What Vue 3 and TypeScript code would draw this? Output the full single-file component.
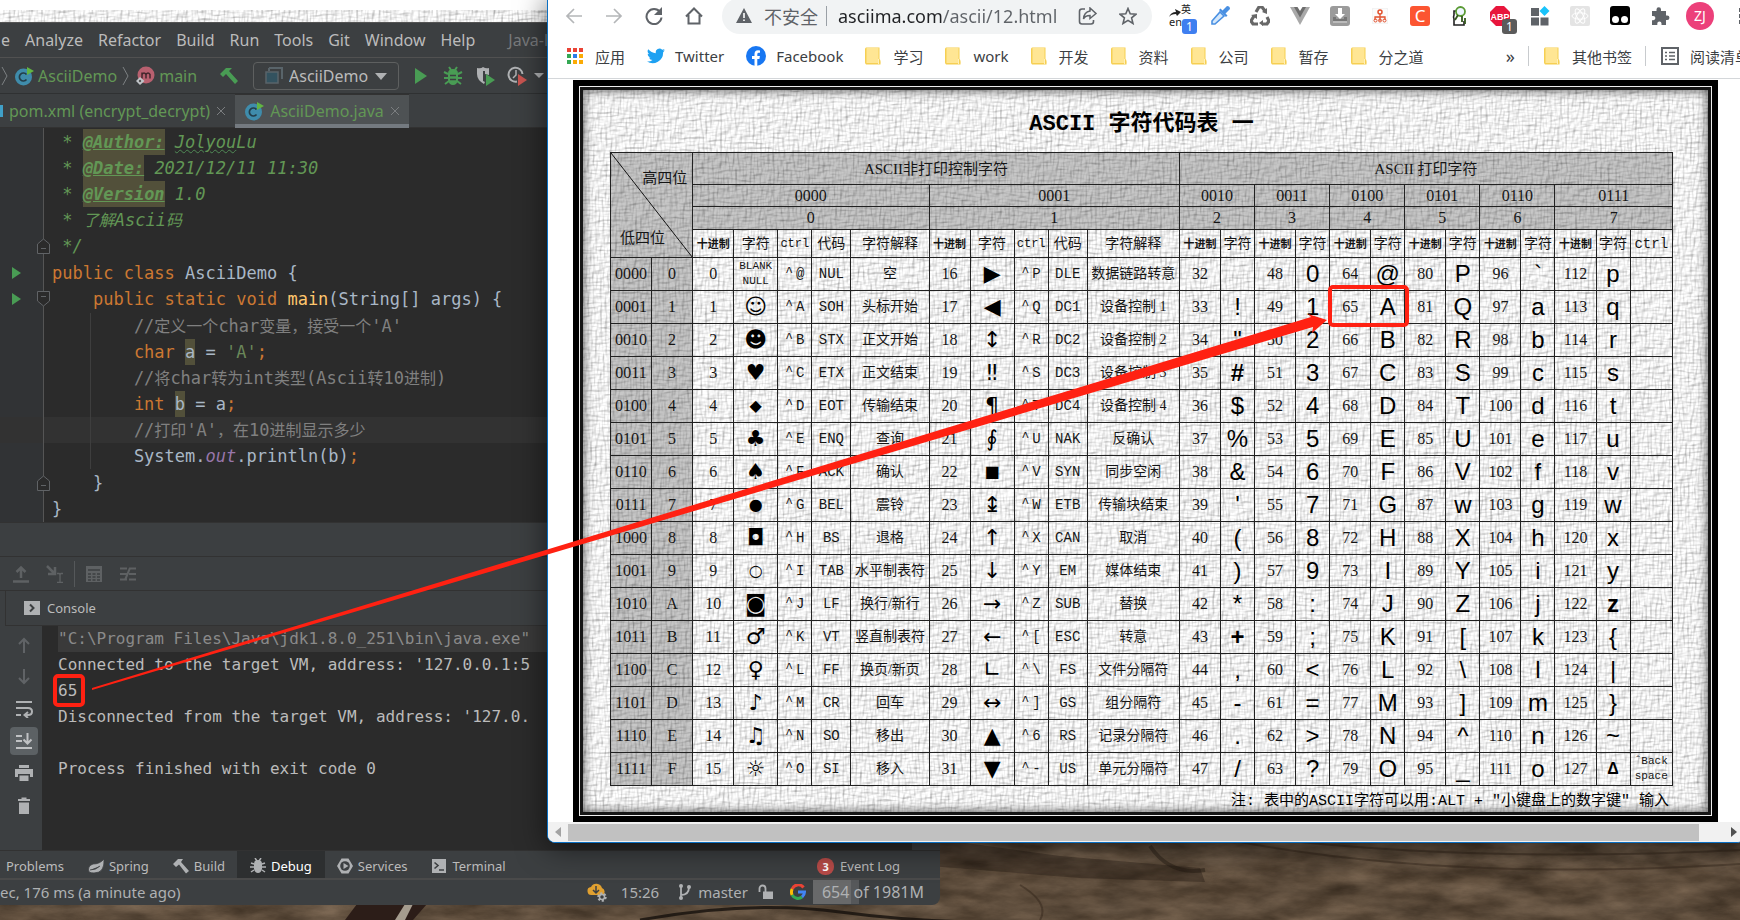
<script setup lang="ts">
type Token = { cls: string; text: string }
type Line = { run?: boolean; fold?: 'down' | 'up'; now?: boolean; gap?: boolean; guide?: boolean; tokens: Token[] }

const split = (cls: string, text: string): Token[] =>
  text
    .split(/([\u2e80-\uffef]+)/)
    .filter(Boolean)
    .map((part) => ({ cls: /[\u2e80-\uffef]/.test(part) ? cls + ' zh' : cls, text: part }))

const code = (...pairs: [string, string][]): Token[] => pairs.flatMap(([cls, text]) => split(cls, text))

const lines: Line[] = [
  { tokens: code(['doc', ' * '], ['tag', '@Author:'], ['doc', ' '], ['doc wave', 'Jolyou'], ['doc', 'Lu']) },
  { tokens: code(['doc', ' * '], ['tag', '@Date:'], ['doc', ' 2021/12/11 11:30']) },
  { tokens: code(['doc', ' * '], ['tag', '@Version'], ['doc', ' 1.0']) },
  { tokens: code(['doc', ' * 了解Ascii码']) },
  { fold: 'up', tokens: code(['doc', ' */']) },
  { run: true, gap: true, tokens: code(['kw', 'public class '], ['id', 'AsciiDemo {']) },
  { run: true, fold: 'down', tokens: code(['kw', '    public static void '], ['fn', 'main'], ['id', '(String[] args) {']) },
  { gap: true, guide: true, tokens: code(['cm', "        //定义一个char变量，接受一个'A'"]) },
  { guide: true, tokens: code(['kw', '        char '], ['id mark', 'a'], ['id', ' = '], ['str', "'A'"], ['kw', ';']) },
  { guide: true, tokens: code(['cm', '        //将char转为int类型(Ascii转10进制)']) },
  { guide: true, tokens: code(['kw', '        int '], ['id mark', 'b'], ['id', ' = a'], ['kw', ';']) },
  { guide: true, now: true, tokens: code(['cm', "        //打印'A'，在10进制显示多少"]) },
  { guide: true, tokens: code(['id', '        System.'], ['field', 'out'], ['id', '.println(b)'], ['kw', ';']) },
  { fold: 'up', gap: true, tokens: code(['id', '    }']) },
  { tokens: code(['id', '}']) },
]

const menus = ['e', 'Analyze', 'Refactor', 'Build', 'Run', 'Tools', 'Git', 'Window', 'Help']
const folders = ['学习', 'work', '开发', '资料', '公司', '暂存', '分之道']

const hex = '0123456789ABCDEF'.split('')
const glyphs0 = ['', '☺', '☻', '♥', '◆', '♣', '♠', '●', '◘', '○', '◙', '♂', '♀', '♪', '♫', '☼']
const glyphs1 = ['▶', '◀', '↕', '‼', '¶', '∮', '■', '↨', '↑', '↓', '→', '←', '∟', '↔', '▲', '▼']
const smallGlyphs = '◆●○■'
const ctrl0 = '@ABCDEFGHIJKLMNO'.split('')
const ctrl1 = 'PQRSTUVWXYZ[\\]6-'.split('')
const code0 = ['NUL', 'SOH', 'STX', 'ETX', 'EOT', 'ENQ', 'ACK', 'BEL', 'BS', 'TAB', 'LF', 'VT', 'FF', 'CR', 'SO', 'SI']
const code1 = ['DLE', 'DC1', 'DC2', 'DC3', 'DC4', 'NAK', 'SYN', 'ETB', 'CAN', 'EM', 'SUB', 'ESC', 'FS', 'GS', 'RS', 'US']
const desc0 = ['空', '头标开始', '正文开始', '正文结束', '传输结束', '查询', '确认', '震铃', '退格', '水平制表符', '换行/新行', '竖直制表符', '换页/新页', '回车', '移出', '移入']
const desc1 = ['数据链路转意', '设备控制 1', '设备控制 2', '设备控制 3', '设备控制 4', '反确认', '同步空闲', '传输块结束', '取消', '媒体结束', '替换', '转意', '文件分隔符', '组分隔符', '记录分隔符', '单元分隔符']

const rows = hex.map((h, i) => ({
  bits: i.toString(2).padStart(4, '0'),
  hex: h,
  control: [
    { dec: i, glyph: glyphs0[i], ctrl: ctrl0[i], code: code0[i], desc: desc0[i] },
    { dec: i + 16, glyph: glyphs1[i], ctrl: ctrl1[i], code: code1[i], desc: desc1[i] },
  ],
  print: [2, 3, 4, 5, 6, 7].map((n) => {
    const dec = n * 16 + i
    const ch = dec === 87 ? 'w' : dec === 127 ? 'Δ' : String.fromCharCode(dec)
    return { dec, ch }
  }),
}))

const strong = '#+z'
const columns = [
  'bit', 'bit', 'dec', 'sym', 'ctl', 'cod', 'dsc', 'dec', 'sym', 'ctl', 'cod', 'long',
  'dec', 'chr', 'dec', 'chr', 'dec', 'chr', 'dec', 'chr', 'dec', 'chr', 'dec', 'chr', 'back',
]
</script>

<template>
  <div class="desktop">
    <svg class="wallpaper" width="100%" height="100%" aria-hidden="true">
      <defs>
        <filter id="grain" x="0" y="0" width="100%" height="100%" color-interpolation-filters="sRGB">
          <feTurbulence type="fractalNoise" baseFrequency="0.02 0.06" numOctaves="6" seed="7" />
          <feColorMatrix values="0.28 0.12 0 0 0.16  0.25 0.1 0 0 0.12  0.22 0.08 0 0 0.08  0 0 0 0 1" />
        </filter>
        <filter id="weave" x="0" y="0" width="100%" height="100%" color-interpolation-filters="sRGB">
          <feTurbulence type="fractalNoise" baseFrequency="0.08 0.4" numOctaves="2" seed="3" result="a" />
          <feDiffuseLighting in="a" surfaceScale="0.5" diffuseConstant="1.27" lighting-color="#fff" result="la">
            <feDistantLight azimuth="225" elevation="50" />
          </feDiffuseLighting>
          <feTurbulence type="fractalNoise" baseFrequency="0.4 0.08" numOctaves="2" seed="9" result="b" />
          <feDiffuseLighting in="b" surfaceScale="0.5" diffuseConstant="1.27" lighting-color="#fff" result="lb">
            <feDistantLight azimuth="225" elevation="50" />
          </feDiffuseLighting>
          <feBlend in="la" in2="lb" mode="multiply" />
        </filter>
      </defs>
      <rect width="100%" height="100%" filter="url(#grain)" />
      <path d="M930 838L1060 856 1200 868 1205 882 1080 878 930 866Z" fill="#1c130d" opacity=".35" />
      <path d="M1150 846q20 30 55 24" stroke="#1c130d" stroke-width="4" fill="none" opacity=".4" />
      <path d="M640 920q110-20 200-8t190 10" stroke="#15100c" stroke-width="3" fill="none" opacity=".8" />
      <path d="M345 920l12-16h70l-14 16z" fill="#2c1d18" />
      <path d="M395 920l10-16h8l-8 16z" fill="#a59c8e" />
      <path d="M1240 842q220 40 500 22M1300 842q200 20 440 8M1020 885q30 18 20 35" stroke="#2a1d14" stroke-width="2" fill="none" opacity=".4" />
    </svg>

    <div class="back-window">
      <svg class="strip" width="100%" height="12" aria-hidden="true"><rect width="100%" height="12" filter="url(#weave)" /></svg>
    </div>

    <section class="ide" aria-label="IDE">
      <nav class="menu">
        <button v-for="m in menus" :key="m" type="button">{{ m }}</button>
        <span class="project">Java-l</span>
      </nav>

      <div class="toolbar">
        <div class="crumbs">
          <svg width="10" height="20" viewBox="0 0 10 20"><path d="M2 1l5 9-5 9" fill="none" stroke="#7d8083" /></svg>
          <svg width="20" height="20" viewBox="0 0 20 20"><circle cx="9.500" cy="11" r="8.500" fill="#3f8cab" /><path d="M12.500 8.500a4 4 0 1 0 0 5" fill="none" stroke="#233d49" stroke-width="1.700" /><path d="M13 1l7 4-7 4z" fill="#62b543" /></svg>
          <span>AsciiDemo</span>
          <svg width="10" height="20" viewBox="0 0 10 20"><path d="M2 1l5 9-5 9" fill="none" stroke="#7d8083" /></svg>
          <svg width="20" height="20" viewBox="0 0 20 20"><circle cx="11" cy="9" r="8.500" fill="#b8606f" /><path d="M7 12.500v-6M7 8.500q2-3 4 0v4M11 8.500q2-3 4 0v4" fill="none" stroke="#43272c" stroke-width="1.500" /><path d="M5 11l4.500 4L5 19l-4-4z" fill="#c0c4c8" /><circle cx="5" cy="15" r="1.200" fill="#555" /></svg>
          <span>main</span>
        </div>
        <button type="button" class="act" aria-label="Build"><svg width="20" height="20" viewBox="0 0 20 20"><path d="M1 8l6-6h6L10 5l9 10-3 3-9-10-3 3z" fill="#499c54" /></svg></button>
        <div class="combo">
          <svg width="18" height="18" viewBox="0 0 18 18"><path d="M4 1h13v11M4 1v3" fill="none" stroke="#59646a" stroke-width="2" /><rect x="1" y="5" width="12" height="11" fill="#33525f" stroke="#59646a" stroke-width="1.500" /></svg>
          <select aria-label="Run configuration"><option>AsciiDemo</option></select>
          <svg width="12" height="8" viewBox="0 0 12 8"><path d="M0 1h12L6 8z" fill="#afb1b3" /></svg>
        </div>
        <button type="button" class="act" aria-label="Run"><svg width="20" height="20" viewBox="0 0 20 20"><path d="M4 2l12 8-12 8z" fill="#499c54" /></svg></button>
        <button type="button" class="act" aria-label="Debug"><svg width="20" height="20" viewBox="0 0 20 20"><path d="M5 7.500Q5 3 10 3t5 4.500V14q-1 5-5 5t-5-5z" fill="#499c54" /><path d="M6 1l2 3M14 1l-2 3M1 6l4 2M19 6l-4 2M1 12h4M19 12h-4M2 18l4-3M18 18l-4-3" stroke="#499c54" stroke-width="2" /><path d="M7 9.500h6M7 13.500h6" stroke="#3c3f41" stroke-width="1.500" /></svg></button>
        <button type="button" class="act" aria-label="Coverage"><svg width="20" height="20" viewBox="0 0 20 20"><path d="M2 2q4 1 6-1 3 2 6 1v7l-4-1v-3H8v10l2 1-1 2q-7-4-7-10z" fill="#afb1b3" /><path d="M11 8l9 6-9 6z" fill="#499c54" /></svg></button>
        <button type="button" class="act" aria-label="Profile"><svg width="20" height="20" viewBox="0 0 20 20"><path d="M10 15.500A7 7 0 1 1 15.500 8" fill="none" stroke="#afb1b3" stroke-width="2" /><path d="M9 4v5l-3 3" fill="none" stroke="#afb1b3" stroke-width="1.500" /><path d="M11 8l9 6-9 6z" fill="#c75450" /></svg></button>
        <svg width="12" height="7" viewBox="0 0 12 7"><path d="M1 1h10L6 6z" fill="#afb1b3" /></svg>
      </div>

      <div class="tabs" role="tablist">
        <button type="button" role="tab" class="tab pom"><i></i><span>pom.xml (encrypt_decrypt)</span>
          <svg width="10" height="10" viewBox="0 0 10 10"><path d="M1 1l8 8M9 1l-8 8" stroke="#7b7e80" /></svg></button>
        <button type="button" role="tab" class="tab on" aria-selected="true">
          <svg width="20" height="20" viewBox="0 0 20 20"><circle cx="9.500" cy="11" r="8.500" fill="#3f8cab" /><path d="M12.500 8.500a4 4 0 1 0 0 5" fill="none" stroke="#233d49" stroke-width="1.700" /><path d="M13 1l7 4-7 4z" fill="#62b543" /></svg>
          <span>AsciiDemo.java</span>
          <svg width="10" height="10" viewBox="0 0 10 10"><path d="M1 1l8 8M9 1l-8 8" stroke="#7b7e80" /></svg></button>
      </div>

      <div class="editor">
        <div v-for="(l, i) in lines" :key="i" class="line" :class="{ now: l.now, gap: l.gap }">
          <div class="gutter">
            <svg v-if="l.run" width="10" height="12" viewBox="0 0 10 12"><path d="M1 0l9 6-9 6z" fill="#499c54" /></svg>
            <svg v-if="l.fold === 'up'" class="fold" width="13" height="16" viewBox="0 0 13 16"><path d="M.5 15.500V6l6-5 6 5v9.500zM4 10.500h5" fill="#2b2b2b" stroke="#606366" /></svg>
            <svg v-if="l.fold === 'down'" class="fold" width="13" height="16" viewBox="0 0 13 16"><path d="M.5.5V10l6 5 6-5V.5zM4 5.500h5" fill="#2b2b2b" stroke="#606366" /></svg>
          </div>
          <div class="src" :class="{ guide: l.guide }"><span v-for="(t, k) in l.tokens" :key="k" :class="t.cls">{{ t.text }}</span></div>
        </div>
      </div>

      <div class="panel-head"></div>
      <div class="debug-tools">
        <button type="button" aria-label="Step out"><svg width="18" height="18" viewBox="0 0 18 18"><path d="M9 13V3M4.500 7L9 2.500 13.500 7M1 16.500h16" fill="none" stroke="#5e6163" stroke-width="2.500" /></svg></button>
        <button type="button" aria-label="Run to cursor"><svg width="18" height="18" viewBox="0 0 18 18"><path d="M1 1l7 7M2 9h7V2" fill="none" stroke="#5e6163" stroke-width="2.500" /><path d="M11 8.500h2l1 1 1-1h2M14 9v8M11 17.500h6" fill="none" stroke="#5e6163" stroke-width="1.300" /></svg></button>
        <i class="vsep"></i>
        <button type="button" aria-label="Evaluate"><svg width="18" height="18" viewBox="0 0 18 18"><path d="M1 1h16v16H1z" fill="#5e6163" /><path d="M3 5h12M3 9h3M7.500 9h3M12 9h3M3 12h3M7.500 12h3M12 12h3M3 15h3M7.500 15h3M12 15h3" stroke="#3c3f41" stroke-width="1.600" /></svg></button>
        <button type="button" aria-label="Trace"><svg width="18" height="18" viewBox="0 0 18 18"><path d="M1 3.500h7M1 9h7M1 14.500h7M10 3.500h7M10 9h7M10 14.500h7M6 15l5-12" fill="none" stroke="#5e6163" stroke-width="2" /></svg></button>
      </div>
      <div class="console-head"><svg width="16" height="16" viewBox="0 0 16 16"><path d="M0 1h16v14H0z" fill="#afb1b3" /><path d="M6 4.500L9.500 8 6 11.500" fill="none" stroke="#3c3f41" stroke-width="2" /></svg><span>Console</span></div>

      <div class="console">
        <div class="side">
          <button type="button" aria-label="Up"><svg width="18" height="18" viewBox="0 0 18 18"><path d="M9 17V3M4 8l5-5 5 5" fill="none" stroke="#606366" stroke-width="2" /></svg></button>
          <button type="button" aria-label="Down"><svg width="18" height="18" viewBox="0 0 18 18"><path d="M9 1v14M4 10l5 5 5-5" fill="none" stroke="#606366" stroke-width="2" /></svg></button>
          <button type="button" aria-label="Soft wrap"><svg width="18" height="18" viewBox="0 0 18 18"><path d="M1 2h16M1 8h12q4 0 4 3.500T13 15h-2M1 15h5M13 12l-3.500 3 3.500 3" fill="none" stroke="#afb1b3" stroke-width="2" /></svg></button>
          <button type="button" class="on" aria-label="Scroll to end"><svg width="18" height="18" viewBox="0 0 18 18"><path d="M1 4h6M1 9h6M1 16h16M12.500 1v10M8.500 7.500l4 4 4-4" fill="none" stroke="#c0c2c4" stroke-width="2" /></svg></button>
          <button type="button" aria-label="Print"><svg width="18" height="18" viewBox="0 0 18 18"><path d="M4 1h10v3H4zM0 5h18v8h-3v-3H3v3H0zM4.500 11.500h9V17h-9z" fill="#afb1b3" /></svg></button>
          <button type="button" aria-label="Clear"><svg width="18" height="18" viewBox="0 0 18 18"><path d="M3 3h3.500V1.500h5V3H15v2H3zM4 6.500h10V18H4z" fill="#afb1b3" /></svg></button>
        </div>
        <div class="output">
          <p class="cmd">"C:\Program Files\Java\jdk1.8.0_251\bin\java.exe"</p>
          <p>Connected to the target VM, address: '127.0.0.1:5</p>
          <p>65</p>
          <p>Disconnected from the target VM, address: '127.0.</p>
          <p>&nbsp;</p>
          <p>Process finished with exit code 0</p>
        </div>
        <div class="rail"></div>
      </div>

      <div class="tool-tabs">
        <button type="button" class="first">Problems</button>
        <button type="button"><svg width="16" height="16" viewBox="0 0 16 16"><path d="M16 1q1 14-10 14-3 0-5-1Q-1 8 5 6q7 0 11-5zM2 12q6 0 10-4" fill="#afb1b3" stroke="#3c3f41" stroke-width=".8" /></svg>Spring</button>
        <button type="button"><svg width="16" height="16" viewBox="0 0 16 16"><path d="M0 6l5-5h5L8 4l8 9-3 2.500L6 6.500 3 9z" fill="#afb1b3" /></svg>Build</button>
        <button type="button" class="on"><svg width="16" height="16" viewBox="0 0 16 16"><path d="M4 6q0-4 4-4t4 4v5q-1 4-4 4t-4-4z" fill="#afb1b3" /><path d="M5 0l2 3M11 0L9 3M1 5l3 1M15 5l-3 1M0 9h4M16 9h-4M1 14l3-2M15 14l-3-2" stroke="#afb1b3" stroke-width="1.500" /></svg>Debug</button>
        <button type="button"><svg width="16" height="16" viewBox="0 0 16 16"><path d="M4.500.5h7L16 8l-4.500 7.500h-7L0 8z" fill="#afb1b3" /><circle cx="8" cy="8" r="4.800" fill="#3c3f41" /><path d="M6.500 5l5 3-5 3z" fill="#afb1b3" /></svg>Services</button>
        <button type="button"><svg width="16" height="16" viewBox="0 0 16 16"><path d="M1 1h14v14H1z" fill="#afb1b3" /><path d="M3.500 4.500L7 7.500l-3.500 3M8 12h5" fill="none" stroke="#3c3f41" stroke-width="1.600" /></svg>Terminal</button>
        <button type="button" class="log"><b>3</b>Event Log</button>
      </div>

      <footer class="status">
        <span class="msg">ec, 176 ms (a minute ago)</span>
        <svg width="20" height="20" viewBox="0 0 20 20"><path d="M5 13a4 4 0 0 1-1-8 6 6 0 0 1 11 1 4 4 0 0 1 1 7z" fill="#e0a030" /><path d="M9 4v6M6 8l3 3 3-3" stroke="#3c3f41" stroke-width="1.500" fill="none" /><circle cx="15" cy="15" r="3.500" fill="none" stroke="#afb1b3" stroke-width="2.500" stroke-dasharray="2 1.600" /><circle cx="15" cy="15" r="2.500" fill="none" stroke="#afb1b3" stroke-width="1.500" /></svg>
        <span class="time">15:26</span>
        <svg width="14" height="18" viewBox="0 0 14 18"><path d="M3 2v14M3 12q8 0 8-8" fill="none" stroke="#afb1b3" stroke-width="1.800" /><circle cx="3" cy="3" r="2" fill="#afb1b3" /><circle cx="3" cy="15" r="2" fill="#afb1b3" /><circle cx="11" cy="4" r="2" fill="#afb1b3" /></svg>
        <span class="branch">master</span>
        <svg width="16" height="16" viewBox="0 0 16 16"><path d="M1.500 8V4.500a3 3 0 0 1 6 0V8" fill="none" stroke="#afb1b3" stroke-width="1.800" /><path d="M5 7.500h10V15H5z" fill="#afb1b3" /></svg>
        <svg class="goog" width="16" height="16" viewBox="0 0 16 16"><path d="M13.500 3.500A6.500 6.500 0 0 0 2.200 5" stroke="#ea4335" fill="none" stroke-width="3" /><path d="M2.200 5a6.500 6.500 0 0 0 0 6" stroke="#fbbc05" fill="none" stroke-width="3" /><path d="M2.200 11a6.500 6.500 0 0 0 9.800 2" stroke="#34a853" fill="none" stroke-width="3" /><path d="M12 13q2.500-2 2.500-5H8" stroke="#4285f4" fill="none" stroke-width="3" /></svg>
        <button type="button" class="mem">654 of 1981M</button>
      </footer>
    </section>

    <section class="browser" aria-label="Browser">
      <div class="nav">
        <button type="button" aria-label="Back"><svg width="18" height="18" viewBox="0 0 18 18"><path d="M17 9H2M9 2L2 9l7 7" fill="none" stroke="#b4b6b8" stroke-width="1.700" /></svg></button>
        <button type="button" aria-label="Forward"><svg width="18" height="18" viewBox="0 0 18 18"><path d="M1 9h15M9 2l7 7-7 7" fill="none" stroke="#b4b6b8" stroke-width="1.700" /></svg></button>
        <button type="button" aria-label="Reload"><svg width="18" height="18" viewBox="0 0 18 18"><path d="M15 5a7.500 7.500 0 1 0 1.500 5.500" fill="none" stroke="#5f6368" stroke-width="2" /><path d="M17 0v8H9z" fill="#5f6368" /></svg></button>
        <button type="button" aria-label="Home"><svg width="18" height="18" viewBox="0 0 18 18"><path d="M1 9.500L9 1.500l8 8M3.500 8v8.500h11V8" fill="none" stroke="#5f6368" stroke-width="2" /></svg></button>
        <div class="omni">
          <svg width="16" height="15" viewBox="0 0 16 15"><path d="M8 0l8 15H0z" fill="#5f6368" /><path d="M8 5v5M8 11.500v1.500" stroke="#fff" stroke-width="1.600" /></svg>
          <span class="unsafe">不安全</span>
          <i></i>
          <input type="text" aria-label="Address" value="asciima.com/ascii/12.html" />
          <button type="button" aria-label="Share"><svg width="20" height="18" viewBox="0 0 20 18"><path d="M7 2H4Q1.500 2 1.500 4.500v10Q1.500 17 4 17h9q2.500 0 2.500-2.500V13" fill="none" stroke="#5f6368" stroke-width="1.600" /><path d="M12 1l6 5.500-6 5V8.500Q7 8.500 5.500 12 6 5 12 4z" fill="none" stroke="#5f6368" stroke-width="1.500" /></svg></button>
          <button type="button" aria-label="Bookmark"><svg width="18" height="18" viewBox="0 0 18 18"><path d="M9 1.500l2.200 5.300 5.800.4-4.400 3.700 1.400 5.600L9 13.400l-5 3.100 1.400-5.600L1 7.200l5.800-.4z" fill="none" stroke="#5f6368" stroke-width="1.600" /></svg></button>
        </div>
        <button type="button" class="ext" aria-label="Translate"><span class="en"><small>英</small><svg width="12" height="8" viewBox="0 0 12 8"><path d="M0 8q2-5 7-5L6 0l6 3-4 4-1-2q-5 0-7 3z" fill="#222" /></svg><em>en</em></span><b class="blue">1</b></button>
        <button type="button" class="ext" aria-label="Picker"><svg width="20" height="20" viewBox="0 0 20 20"><path d="M2 18v-3l8-9 4 4-9 8z" fill="#d5e8fb" stroke="#4a90e2" stroke-width="1.600" /><path d="M9 4l7 7 1.500-1.500L15.500 7.500 20 3q0-3-3-3l-4.500 4.500-2-2z" fill="#4a90e2" /></svg></button>
        <button type="button" class="ext" aria-label="Recycle"><svg width="20" height="20" viewBox="0 0 20 20"><path d="M6 6l3-5h3l3 4M4 10l-3 5 2 3h5M12 18h5l2-3-2-4" fill="none" stroke="#686868" stroke-width="3.200" /><path d="M17 2v6l-5-2zM1 9l6-1v5zM13 14v6l-4-3z" fill="#686868" /></svg></button>
        <button type="button" class="ext" aria-label="Vue"><svg width="20" height="18" viewBox="0 0 20 18"><path d="M0 0h20L10 18z" fill="#a9a9a9" /><path d="M4 0h12l-6 10.500z" fill="#6d6d6d" /><path d="M7.500 0h5L10 4z" fill="#fff" /></svg></button>
        <button type="button" class="ext" aria-label="Download"><svg width="20" height="20" viewBox="0 0 20 20"><rect width="20" height="20" rx="3" fill="#9b9b9b" /><path d="M3 11v6h14v-6h-3v2H6v-2z" fill="#777" /><path d="M8 2h4v6h3l-5 5-5-5h3z" fill="#fff" /><path d="M3 16h14" stroke="#fff" /></svg></button>
        <button type="button" class="ext" aria-label="Sitemap"><svg width="16" height="16" viewBox="0 0 16 16"><rect width="16" height="16" rx="2" fill="#fbfbfb" stroke="#eee" /><path d="M8 6v7M3 12V9h10v3" stroke="#e2522e" stroke-width="1.300" fill="none" /><circle cx="8" cy="4" r="2" fill="none" stroke="#e2522e" stroke-width="1.500" /><circle cx="3.500" cy="12.500" r="1.500" fill="none" stroke="#e2522e" /><circle cx="8" cy="12.500" r="1.500" fill="none" stroke="#e2522e" /><circle cx="12.500" cy="12.500" r="1.500" fill="none" stroke="#e2522e" /></svg></button>
        <button type="button" class="ext" aria-label="CSDN"><span class="cee">C</span></button>
        <button type="button" class="ext" aria-label="Search"><svg width="18" height="20" viewBox="0 0 18 20"><path d="M6 5H3v4q-1 2 0 4v6h10v-4" fill="none" stroke="#222" stroke-width="1.600" /><circle cx="9.500" cy="5.500" r="4.500" fill="#eef6ff" stroke="#5a9a33" stroke-width="1.800" /><path d="M7 9L4 14M11 10v6M14 12v6" stroke="#35591f" stroke-width="1.800" /></svg></button>
        <button type="button" class="ext" aria-label="Adblock"><svg width="20" height="20" viewBox="0 0 20 20"><path d="M6 0h8l6 6v8l-6 6H6l-6-6V6z" fill="#e8163c" /><text x="10" y="14" text-anchor="middle" font-family="Liberation Sans, sans-serif" font-size="9" font-weight="700" fill="#fff">ABP</text></svg><b class="grey">1</b></button>
        <button type="button" class="ext" aria-label="Tabs"><svg width="20" height="20" viewBox="0 0 20 20"><path d="M1 2h8v8H1zM1 11.500h8v8H1zM10.500 11.500h8v8h-8z" fill="#5f6368" /><path d="M14.500 0l5 5-5 5-5-5z" fill="#19c3fb" /></svg></button>
        <button type="button" class="ext" aria-label="React"><svg width="20" height="20" viewBox="0 0 20 20"><rect width="20" height="20" rx="2" fill="#e4e4e4" /><g fill="none" stroke="#fff"><ellipse cx="10" cy="10" rx="8" ry="3.200" /><ellipse cx="10" cy="10" rx="8" ry="3.200" transform="rotate(60 10 10)" /><ellipse cx="10" cy="10" rx="8" ry="3.200" transform="rotate(120 10 10)" /></g></svg></button>
        <button type="button" class="ext" aria-label="Scripts"><svg width="20" height="20" viewBox="0 0 20 20"><rect width="20" height="19" rx="3" fill="#000" /><circle cx="5.500" cy="13.500" r="3.500" fill="#fff" /><circle cx="14.500" cy="13.500" r="3.500" fill="#fff" /></svg></button>
        <button type="button" class="ext" aria-label="Extensions"><svg width="20" height="20" viewBox="0 0 20 20"><path d="M2 5h4.500V3.500a2.200 2.200 0 0 1 4.500 0V5H16v4.500h1.200a2.200 2.200 0 0 1 0 4.500H16v5h-4.500v-1.500a2 2 0 0 0-4.200 0V19H2v-4.800h1.300a2 2 0 0 0 0-4.200H2z" fill="#5f6368" /></svg></button>
        <button type="button" class="ext" aria-label="Profile"><span class="avatar">ZJ</span></button>
        <button type="button" class="ext dots" aria-label="Menu"><svg width="4" height="18" viewBox="0 0 4 18"><path d="M0 1h4v4H0zM0 7h4v4H0zM0 13h4v4H0z" fill="#5f6368" /></svg></button>
      </div>

      <div class="marks">
        <a href="#"><svg width="16" height="16" viewBox="0 0 16 16"><path d="M0 0h4v4H0zM6 0h4v4H6zM12 0h4v4h-4z" fill="#ea4335" /><path d="M0 6h4v4H0zM0 12h4v4H0z" fill="#34a853" /><path d="M6 6h4v4H6z" fill="#2a7de9" /><path d="M12 6h4v4h-4zM6 12h4v4H6zM12 12h4v4h-4z" fill="#fbab05" /></svg>应用</a>
        <a href="#" class="site"><svg width="18" height="16" viewBox="0 0 24 20"><path d="M24 2.400a10 10 0 0 1-2.800.8A5 5 0 0 0 23.300.5a10 10 0 0 1-3.100 1.200 4.900 4.900 0 0 0-8.400 4.500A14 14 0 0 1 1.700 1a4.900 4.900 0 0 0 1.500 6.600A4.900 4.900 0 0 1 1 7a4.900 4.900 0 0 0 3.900 4.900 5 5 0 0 1-2.200.1 4.900 4.900 0 0 0 4.600 3.400A9.900 9.900 0 0 1 0 17.400 14 14 0 0 0 21.500 5z" fill="#1da1f2" /></svg>Twitter</a>
        <a href="#" class="site"><svg width="20" height="20" viewBox="0 0 20 20"><circle cx="10" cy="10" r="10" fill="#1877f2" /><path d="M8.500 20v-7H6v-3h2.500V8q0-3.800 3.500-3.800 1 0 2 .2v2.400h-1.200q-1.500 0-1.500 1.400V10h2.600l-.5 3h-2.100v7z" fill="#fff" /></svg>Facebook</a>
        <a v-for="f in folders" :key="f" href="#"><svg width="16" height="18" viewBox="0 0 16 18"><path d="M1 .5h13.500V12q1.500 1 1 5.500H1q-1-1-1-2V2q0-1 1-1.500z" fill="#f6cf53" /><path d="M1.500 1h12v15h-12z" fill="#ffe694" /><path d="M13.500 12v5" stroke="#fff0b8" /></svg>{{ f }}</a>
        <button type="button" class="more" aria-label="More bookmarks">»</button>
        <i></i>
        <a href="#"><svg width="16" height="18" viewBox="0 0 16 18"><path d="M1 .5h13.500V12q1.500 1 1 5.500H1q-1-1-1-2V2q0-1 1-1.500z" fill="#f6cf53" /><path d="M1.500 1h12v15h-12z" fill="#ffe694" /><path d="M13.500 12v5" stroke="#fff0b8" /></svg>其他书签</a>
        <i></i>
        <a href="#" class="list"><svg width="18" height="18" viewBox="0 0 18 18"><rect x="1" y="1" width="16" height="16" fill="none" stroke="#5f6368" stroke-width="2" /><path d="M4 5.500h2M8 5.500h6M4 9h2M8 9h6M4 12.500h2M8 12.500h6" stroke="#5f6368" stroke-width="1.600" /></svg>阅读清单</a>
      </div>

      <main class="page">
        <div class="sheet">
          <svg class="texture" width="100%" height="100%" aria-hidden="true"><rect width="100%" height="100%" filter="url(#weave)" /></svg>
          <h1>ASCII 字符代码表 一</h1>
          <table>
            <colgroup><col v-for="(c, i) in columns" :key="i" :class="c" /></colgroup>
            <thead>
              <tr class="h1">
                <th colspan="2" rowspan="4" class="shade"><div class="corner">
                  <svg width="100%" height="100%" viewBox="0 0 82 105" preserveAspectRatio="none" aria-hidden="true"><path d="M0 0l82 105" stroke="#111" /></svg>
                  <span class="high">高四位</span><span class="low">低四位</span></div></th>
                <th colspan="10" class="shade">ASCII非打印控制字符</th>
                <th colspan="13" class="shade">ASCII 打印字符</th>
              </tr>
              <tr class="h2">
                <th colspan="5" class="shade">0000</th><th colspan="5" class="shade">0001</th>
                <th colspan="2" class="shade">0010</th><th colspan="2" class="shade">0011</th><th colspan="2" class="shade">0100</th>
                <th colspan="2" class="shade">0101</th><th colspan="2" class="shade">0110</th><th colspan="3" class="shade">0111</th>
              </tr>
              <tr class="h3">
                <th colspan="5" class="shade">0</th><th colspan="5" class="shade">1</th>
                <th v-for="n in [2, 3, 4, 5, 6]" :key="n" colspan="2" class="shade">{{ n }}</th><th colspan="3" class="shade">7</th>
              </tr>
              <tr class="h4">
                <template v-for="n in 2" :key="n"><th class="ten">十进制</th><th>字符</th><th class="mono">ctrl</th><th>代码</th><th>字符解释</th></template>
                <template v-for="n in 6" :key="n"><th class="ten">十进制</th><th>字符</th></template>
                <th class="mono wide">ctrl</th>
              </tr>
            </thead>
            <tbody>
              <tr v-for="r in rows" :key="r.hex">
                <td class="shade num">{{ r.bits }}</td><td class="shade num">{{ r.hex }}</td>
                <template v-for="c in r.control" :key="c.dec">
                  <td class="num">{{ c.dec }}</td>
                  <td v-if="c.dec === 0" class="blank">BLANK<br />NULL</td>
                  <td v-else class="glyph" :class="{ small: smallGlyphs.includes(c.glyph) }">{{ c.glyph }}</td>
                  <td class="mono key"><sup>^</sup>{{ c.ctrl }}</td>
                  <td class="mono">{{ c.code }}</td>
                  <td class="desc">{{ c.desc }}</td>
                </template>
                <template v-for="p in r.print" :key="p.dec">
                  <td class="num">{{ p.dec }}</td>
                  <td class="big" :class="{ strong: strong.includes(p.ch), tri: p.dec === 127 }">{{ p.ch }}</td>
                </template>
                <td class="blank"><template v-if="r.hex === 'F'">ˆBack<br />space</template></td>
              </tr>
            </tbody>
          </table>
          <p class="note">注: 表中的ASCII字符可以用:ALT + "小键盘上的数字键" 输入</p>
        </div>
      </main>

      <div class="hscroll">
        <button type="button" aria-label="Scroll left"><svg width="6" height="10" viewBox="0 0 6 10"><path d="M6 0v10L0 5z" fill="#a3a3a3" /></svg></button>
        <div class="thumb"></div>
        <button type="button" aria-label="Scroll right"><svg width="6" height="10" viewBox="0 0 6 10"><path d="M0 0v10l6-5z" fill="#505050" /></svg></button>
      </div>
    </section>

    <svg class="ink" width="1740" height="920" viewBox="0 0 1740 920" aria-hidden="true">
      <rect x="55" y="676" width="28" height="29" rx="3" fill="none" stroke="#ff2112" stroke-width="4" />
      <rect x="1330" y="287" width="77" height="38" rx="3" fill="none" stroke="#ff2112" stroke-width="4" />
      <path d="M92 688L1311 317 1308 314 1327 320 1312 333 1313 327 92 690Z" fill="#ff2112" />
    </svg>
  </div>
</template>

<style>
body { margin: 0; background: #4b3b2d; }
</style>

<style scoped>
* { box-sizing: border-box; }
svg { display: block; flex: none; }
button { border: 0; padding: 0; margin: 0; background: none; color: inherit; font: inherit; display: flex; align-items: center; justify-content: center; flex: none; }
i { font-style: normal; }

.desktop { position: relative; min-height: 100vh; overflow: hidden; font-family: "Noto Sans", "Noto Sans CJK SC", sans-serif; white-space: nowrap; }
.wallpaper { position: absolute; inset: 0; }
.back-window { position: absolute; top: 0; left: 0; right: 0; height: 22px; background: #fff; padding-top: 10px; }

/* IDE */
.ide { position: absolute; top: 22px; left: 0; right: 800px; background: #3c3f41; color: #bbb; border-bottom-right-radius: 8px; overflow: hidden; font-size: 16px; }
.menu { height: 36px; display: flex; align-items: center; gap: 15px; padding-left: 1px; border-top: 1px solid #555; border-bottom: 1px solid #515151; }
.project { margin-left: 18px; color: #787a7c; }
.toolbar { height: 36px; display: flex; align-items: center; border-bottom: 1px solid #2f3132; }
.crumbs { width: 213px; display: flex; align-items: center; gap: 4px; color: #629755; }
.act { width: 32px; height: 30px; }
.combo { width: 146px; height: 28px; margin: 0 6px 0 8px; display: flex; align-items: center; gap: 6px; padding: 0 11px; border: 1px solid #5e6060; border-radius: 4px; }
.combo select { flex: 1; min-width: 0; appearance: none; border: 0; padding: 0; background: transparent; color: #bbb; font: inherit; }
.tabs { height: 34px; display: flex; border-bottom: 1px solid #323232; color: #629755; }
.tab { height: 34px; gap: 8px; padding: 0 9px 0 0; }
.tab.pom { width: 235px; justify-content: flex-start; gap: 6px; }
.tab.pom i { width: 3px; height: 12px; background: #40a0c8; }
.tab.pom svg { margin-left: auto; }
.tab.on { width: 174px; background: #4e5254; border-top: 1px solid #323232; border-bottom: 4px solid #747a80; padding: 3px 0 0; gap: 6px; }

.editor { background: #2b2b2b; padding-top: 1px; font-family: "DejaVu Sans Mono", "Noto Sans CJK SC", monospace; font-size: 17px; line-height: 26px; background-image: linear-gradient(90deg, #313335 43px, #555 43px, #555 44px, transparent 44px); }
.line { display: flex; height: 26px; }
.line.gap { margin-top: 1px; }
.line.now { background: #323232; background-image: linear-gradient(90deg, transparent 43px, #555 43px, #555 44px, transparent 44px); }
.gutter { position: relative; width: 52px; display: flex; align-items: center; padding-left: 11px; }
.fold { position: absolute; left: 37px; top: 5px; }
.src { white-space: pre; flex: 1; }
.src.guide { background-image: linear-gradient(90deg, transparent 38px, #3e3e3e 38px, #3e3e3e 39px, transparent 39px); }
.zh { font-size: 16px; }
.doc, .tag { color: #629755; font-style: italic; }
.tag { display: inline-block; font-weight: 700; background: #52503a; text-decoration: underline; height: 26px; vertical-align: top; }
.wave { text-decoration: underline wavy 1px #4f8a55; }
.kw { color: #cc7832; }
.id { color: #a9b7c6; }
.fn { color: #ffc66d; }
.cm { color: #808080; }
.str { color: #6a8759; }
.field { color: #9876aa; font-style: italic; }
.mark { display: inline-block; height: 26px; vertical-align: top; background: #52503a; }

.panel-head { height: 35px; border-top: 1px solid #323232; border-bottom: 1px solid #323232; }
.debug-tools { height: 34px; display: flex; align-items: center; padding-left: 12px; gap: 16px; border-bottom: 1px solid #323232; }
.vsep { width: 1px; height: 26px; background: #55585a; margin: 0 -6px 0 -6px; }
.console-head { height: 35px; display: flex; align-items: center; gap: 7px; padding-left: 18px; margin-left: 5px; font-size: 13px; border-left: 1px solid #323232; border-bottom: 1px solid #323232; }
.console { height: 225px; display: flex; border-bottom: 1px solid #323232; }
.side { width: 42px; padding: 5px 0 0 5px; display: flex; flex-direction: column; align-items: center; gap: 4px; }
.side button { width: 28px; height: 28px; border-radius: 4px; }
.side button.on { background: #5c6164; }
.output { flex: 1; background: #2b2b2b; padding-left: 16px; overflow: hidden; font-family: "DejaVu Sans Mono", monospace; font-size: 16px; line-height: 26px; }
.output p { margin: 0; }
.output .cmd { background: #3a3a3a; color: #8a8a8a; }
.rail { width: 28px; }
.tool-tabs { height: 27px; display: flex; font-size: 13px; padding-right: 40px; }
.tool-tabs button { gap: 5px; padding: 3px 12px 0 12px; }
.tool-tabs .first { padding-left: 6px; }
.tool-tabs .on { background: #2d2f30; color: #fff; padding: 3px 13px 0; }
.tool-tabs .log { margin-left: auto; padding: 3px 0 0; gap: 6px; }
.tool-tabs b { width: 17px; height: 17px; line-height: 17px; border-radius: 8px; background: #b74b48; color: #fff; font-size: 11px; }
.status { height: 27px; display: flex; align-items: center; border-top: 2px solid #4a4a4a; padding: 0 16px 2px 0; font-size: 15px; color: #afb1b3; }
.msg { flex: 1; }
.time { margin: 0 19px 0 14px; }
.branch { margin: 0 10px 0 6px; }
.goog { margin: 0 7px 0 16px; }
.mem { height: 24px; padding: 0 0 0 9px; font-size: 16px; background: linear-gradient(90deg, #68696a 38px, #56585a 38px, #56585a 46px, transparent 46px); }

/* Browser */
.browser { position: absolute; top: -4px; left: 547px; right: -5px; background: #fff; border: 1px solid #0a6fc2; border-radius: 0 0 8px 8px; overflow: hidden; box-shadow: 0 4px 30px rgba(0, 0, 0, 0.6); }
.nav { height: 40px; display: flex; align-items: center; padding: 0 0 3px 6px; }
.nav > button { width: 40px; height: 36px; position: relative; }
.omni { flex: 1; min-width: 0; height: 36px; margin: 0 8px; padding: 0 4px 0 14px; border-radius: 18px; background: #f1f3f4; display: flex; align-items: center; }
.unsafe { margin-left: 12px; font-size: 18px; color: #5f6368; }
.omni i { width: 1px; height: 20px; background: #9aa0a6; margin: 0 11px 0 8px; }
.omni input { flex: 1; min-width: 0; border: 0; padding: 0; outline: 0; font: inherit; font-size: 18px; color: transparent; background: linear-gradient(90deg, #202124 105px, #5f6368 105px); -webkit-background-clip: text; background-clip: text; }
.omni button { width: 40px; }
.ext b { position: absolute; right: 3px; bottom: 0; width: 15px; height: 15px; border-radius: 3px; font-size: 12px; font-weight: 400; line-height: 15px; color: #fff; }
.blue { background: #3f7ff0; }
.grey { background: #5b5b5b; }
.en { display: grid; width: 22px; line-height: 10px; color: #222; }
.en small { font-size: 10px; justify-self: end; line-height: 8px; }
.en svg { margin-top: -4px; }
.en em { font-style: normal; font-size: 11px; justify-self: start; }
.cee { width: 20px; height: 20px; border-radius: 3px; background: #fc5531; color: #fff; font-size: 17px; line-height: 20px; }
.avatar { width: 28px; height: 28px; border-radius: 50%; background: #ec407a; color: #fff; font-size: 14px; line-height: 28px; }
.nav > .dots { margin-right: -16px; padding-left: 1px; }
.marks { height: 42px; display: flex; align-items: center; padding: 0 0 3px 19px; border-bottom: 1px solid #d4d7da; font-size: 15px; }
.marks a { display: flex; align-items: center; gap: 12px; flex: none; margin-right: 22px; color: #3c4043; text-decoration: none; }
.marks a.site { gap: 10px; }
.marks .more { margin: 0 13px 0 auto; font-size: 18px; color: #3c4043; }
.marks i { width: 1px; height: 20px; background: #c8cbce; margin-right: 15px; }
.marks i + a { margin-right: 13px; }
.marks i + a.list { margin-right: -6px; gap: 11px; }

.page { padding: 1px 26px 0 25px; }
.sheet { position: relative; border: 6px solid #000; padding: 4px 39px 4px 31px; }
.sheet::after { content: ""; position: absolute; inset: 0; pointer-events: none; border: 1px solid #eee; box-shadow: inset 0 0 0 3px #161616, inset 0 0 8px 5px rgba(0, 0, 0, 0.5); }
.texture { position: absolute; inset: 0; z-index: 0; }
h1, table, .note { position: relative; }
h1 { margin: 0; height: 62px; text-align: center; font: 700 22px/70px "Liberation Mono", "Noto Sans CJK SC", monospace; color: #000; }
table { width: 100%; table-layout: fixed; border-collapse: collapse; font-family: "Liberation Serif", "Noto Sans CJK SC", serif; color: #151515; }
th, td { border: 1px solid #222; padding: 0; text-align: center; vertical-align: middle; font-weight: 400; font-size: 14px; line-height: 18px; overflow: hidden; }
.shade { background: rgba(0, 0, 0, 0.22); }
.bit, .dec { width: 41px; }
.sym { width: 44px; }
.ctl, .chr { width: 34px; }
.cod { width: 39px; }
.dsc { width: 78px; }
.long { width: 92px; }
.back { width: 42px; }
.h1 { height: 32px; }
.h2 { height: 22px; }
.h3 { height: 23px; }
.h4 { height: 28px; }
.h1 th { font-size: 15px; }
tbody tr { height: 33px; }
.h4 th { font-size: 14px; }
.h4 th.ten { font-size: 11px; font-weight: 700; }
.h4 th.mono { font-size: 12px; }
.h2 th, .h3 th { font-size: 16px; }
td.num { font-size: 16px; }
.mono { font-family: "Liberation Mono", monospace; }
.h4 th.wide { font-size: 14px; }
.key sup { font-size: 13px; line-height: 0; vertical-align: 2px; margin-right: 3px; }
.blank { font: 11px/15px "Liberation Mono", monospace; }
td.glyph { font: 22px/26px "DejaVu Sans", sans-serif; color: #000; }
td.glyph.small { font-size: 16px; }
td.big { font: 24px/28px "Liberation Sans", sans-serif; color: #000; }
td.big.strong { font-weight: 700; }
td.big.tri { font-size: 16px; font-weight: 700; }
.corner { position: relative; height: 104px; display: flex; flex-direction: column; justify-content: space-between; padding: 16px 5px 10px 9px; }
.corner svg { position: absolute; inset: 0; }
.high { align-self: flex-end; }
.low { align-self: flex-start; }
.note { margin: 0; height: 26px; padding-right: 4px; text-align: right; font: 15px/32px "Liberation Mono", "Noto Sans CJK SC", monospace; color: #000; }

.hscroll { height: 20px; display: flex; align-items: center; background: #f1f1f1; }
.hscroll button { width: 20px; height: 20px; }
.thumb { flex: 1; height: 17px; margin-right: 25px; background: #c1c1c1; }
.ink { position: absolute; top: 0; left: 0; pointer-events: none; }
</style>
